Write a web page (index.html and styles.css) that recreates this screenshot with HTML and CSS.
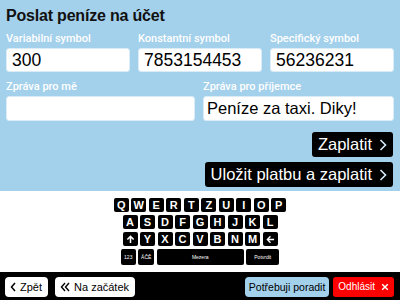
FILE: index.html
```html
<!DOCTYPE html>
<html lang="cs">
<head>
<meta charset="utf-8">
<title>Poslat peníze na účet</title>
<link rel="stylesheet" href="styles.css">
</head>
<body>
<div class="screen">
  <main class="main">
    <h1 class="title">Poslat peníze na účet</h1>
    <div class="row row3">
      <div class="field"><label class="label">Variabilní symbol</label><div class="input">300</div></div>
      <div class="field"><label class="label">Konstantní symbol</label><div class="input">7853154453</div></div>
      <div class="field"><label class="label">Specifický symbol</label><div class="input">56236231</div></div>
    </div>
    <div class="row row2">
      <div class="field"><label class="label">Zpráva pro mě</label><div class="input input-tall"></div></div>
      <div class="field"><label class="label">Zpráva pro příjemce</label><div class="input input-tall">Peníze za taxi. Diky!</div></div>
    </div>
    <div class="actions">
      <button class="btn-big">Zaplatit <svg class="chev" viewBox="0 0 8 12" width="8" height="12"><path d="M1.5 1 L6.5 6 L1.5 11" fill="none" stroke="#d6ecfa" stroke-width="1.6"/></svg></button>
      <button class="btn-big">Uložit platbu a zaplatit <svg class="chev" viewBox="0 0 8 12" width="8" height="12"><path d="M1.5 1 L6.5 6 L1.5 11" fill="none" stroke="#d6ecfa" stroke-width="1.6"/></svg></button>
    </div>
  </main>
  <section class="keyboard">
    <div class="krow">
      <span class="key">Q</span><span class="key">W</span><span class="key">E</span><span class="key">R</span><span class="key">T</span><span class="key">Z</span><span class="key">U</span><span class="key">I</span><span class="key">O</span><span class="key">P</span>
    </div>
    <div class="krow">
      <span class="key">A</span><span class="key">S</span><span class="key">D</span><span class="key">F</span><span class="key">G</span><span class="key">H</span><span class="key">J</span><span class="key">K</span><span class="key">L</span>
    </div>
    <div class="krow">
      <span class="key"><svg viewBox="0 0 10 10" width="9" height="9"><path d="M5 9 V1.5 M1.5 5 L5 1.5 L8.5 5" fill="none" stroke="#fff" stroke-width="1.7"/></svg></span><span class="key">Y</span><span class="key">X</span><span class="key">C</span><span class="key">V</span><span class="key">B</span><span class="key">N</span><span class="key">M</span><span class="key"><svg viewBox="0 0 10 10" width="9" height="9"><path d="M9 5 H1.5 M5 1.5 L1.5 5 L5 8.5" fill="none" stroke="#fff" stroke-width="1.5"/></svg></span>
    </div>
    <div class="krow krow-last">
      <span class="key key-small key-123">123</span><span class="key key-small key-acc">ÁČĚ</span><span class="key key-small key-space">Mezera</span><span class="key key-small key-ok">Potvrdit</span>
    </div>
  </section>
  <footer class="bar">
    <div class="bar-left">
      <button class="btn-nav"><svg viewBox="0 0 6 10" width="6" height="10"><path d="M5 1 L1.5 5 L5 9" fill="none" stroke="#000" stroke-width="1.5"/></svg>Zpět</button>
      <button class="btn-nav"><svg viewBox="0 0 10 10" width="10" height="10"><path d="M5 1 L1.5 5 L5 9 M9 1 L5.5 5 L9 9" fill="none" stroke="#000" stroke-width="1.4"/></svg>Na začátek</button>
    </div>
    <div class="bar-right">
      <button class="btn-help">Potřebuji poradit</button>
      <button class="btn-logout">Odhlásit <svg viewBox="0 0 10 10" width="8" height="8"><path d="M1.5 1.5 L8.5 8.5 M8.5 1.5 L1.5 8.5" fill="none" stroke="#fff" stroke-width="1.8"/></svg></button>
    </div>
  </footer>
</div>
</body>
</html>
```
FILE: styles.css
```css
* { box-sizing: border-box; }
html, body { margin: 0; padding: 0; }
body {
  width: 400px;
  height: 300px;
  overflow: hidden;
  font-family: "Liberation Sans", Arial, sans-serif;
  background: #fff;
}
.screen {
  width: 400px;
  height: 300px;
  display: flex;
  flex-direction: column;
}
.main {
  height: 191px;
  background: #a3d0eb;
  padding: 6px 6px 0 6px;
  display: flex;
  flex-direction: column;
}
.title {
  margin: 0;
  font-size: 16px;
  line-height: 20px;
  font-weight: 700;
  color: #111;
  font-family: "Liberation Sans", Arial, sans-serif;
  letter-spacing: -0.2px;
}
.row {
  display: grid;
  column-gap: 8px;
}
.row3 {
  grid-template-columns: 1fr 1fr 1fr;
  margin-top: 6px;
}
.row2 {
  grid-template-columns: 189px 1fr;
  margin-top: 8px;
}
.field {
  display: flex;
  flex-direction: column;
}
.label {
  color: #fff;
  font-family: Roboto, "Liberation Sans", Arial, sans-serif;
  font-weight: 500;
  font-size: 11px;
  line-height: 13px;
  height: 13px;
  margin-bottom: 3px;
  white-space: nowrap;
}
.input {
  height: 24px;
  background: #fff;
  border-radius: 3px;
  border: 1px solid #d9ecf7;
  color: #000;
  font-size: 17.5px;
  line-height: 22px;
  padding-left: 5px;
  white-space: nowrap;
}
.input-tall {
  height: 25px;
  font-size: 16.5px;
  line-height: 23px;
  padding-left: 3px;
}
.actions {
  margin-top: 11px;
  display: flex;
  flex-direction: column;
  align-items: flex-end;
  gap: 5px;
}
.btn-big {
  height: 25px;
  background: #000;
  color: #fff;
  border: none;
  border-radius: 3px;
  font-family: "Liberation Sans", Arial, sans-serif;
  font-size: 16.5px;
  padding: 0 6px 0 6px;
  display: flex;
  align-items: center;
  gap: 7px;
  margin-right: 1px;
}
.chev { display: block; }
.keyboard {
  height: 81px;
  background: #fff;
  padding-top: 7px;
  display: flex;
  flex-direction: column;
  align-items: center;
  gap: 3px;
}
.krow {
  display: flex;
  gap: 2.5px;
}
.key {
  width: 15px;
  height: 14px;
  background: #000;
  color: #fff;
  border-radius: 2px;
  font-weight: 700;
  font-size: 11px;
  display: flex;
  align-items: center;
  justify-content: center;
}
.key-small {
  height: 16px;
  font-size: 5px;
  font-weight: 400;
}
.key-123 { width: 15px; }
.key-acc { width: 16px; }
.key-space { width: 87px; }
.key-ok { width: 33px; }
.bar {
  flex: 1;
  background: #000;
  display: flex;
  justify-content: space-between;
  align-items: center;
  padding: 1px 6px 0 5px;
}
.bar-left, .bar-right {
  display: flex;
  gap: 7px;
}
.bar-right { gap: 4px; }
button { font-family: "Liberation Sans", Arial, sans-serif; cursor: pointer; }
.btn-nav {
  height: 20px;
  background: #fff;
  color: #000;
  border: none;
  border-radius: 4px;
  font-size: 11px;
  padding: 0 6px 0 5px;
  display: flex;
  align-items: center;
  gap: 4px;
}
.btn-help {
  height: 20px;
  background: #a3d0eb;
  color: #000;
  border: none;
  border-radius: 4px;
  font-size: 10.5px;
  padding: 0 4px;
}
.btn-logout {
  height: 20px;
  background: #f00;
  color: #fff;
  border: none;
  border-radius: 3px;
  font-size: 10px;
  padding: 0 5px;
  display: flex;
  align-items: center;
  gap: 6px;
}
```
